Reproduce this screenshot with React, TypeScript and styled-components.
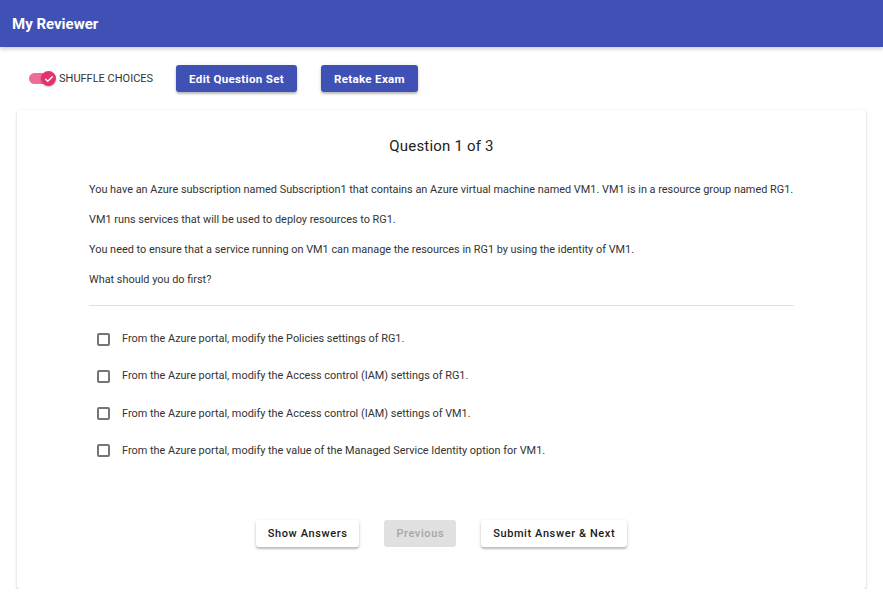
import React from "react";
import styled, { createGlobalStyle } from "styled-components";

const Global = createGlobalStyle`
  html, body { margin: 0; padding: 0; background: #fff; }
  body { font-family: Roboto, "Noto Sans", Arial, sans-serif; color: #222; }
  * { box-sizing: border-box; }
`;

const Header = styled.header`
  height: 47px;
  background: #3f51b5;
  display: flex;
  align-items: center;
  padding: 0 12px;
  box-shadow: 0 2px 4px rgba(0,0,0,0.2);
`;

const Title = styled.h1`
  margin: 0;
  color: #fff;
  font-size: 15px;
  font-weight: 700;
`;

const Main = styled.main`
  padding: 18px 17px 0 17px;
`;

const Toolbar = styled.div`
  display: flex;
  align-items: center;
  padding-left: 12px;
  height: 27px;
  margin-bottom: 18px;
`;

const SwitchWrap = styled.label`
  display: flex;
  align-items: center;
  font-size: 11px;
  color: #333;
  margin-right: 23px;
`;

const Track = styled.span`
  position: relative;
  width: 22px;
  height: 11px;
  border-radius: 6px;
  background: #ef6b98;
  margin-right: 8px;
`;

const Thumb = styled.span`
  position: absolute;
  left: 12px;
  top: -2px;
  width: 15px;
  height: 15px;
  border-radius: 50%;
  background: #e2336f;
  display: flex;
  align-items: center;
  justify-content: center;
  box-shadow: 0 1px 2px rgba(0,0,0,0.25);
`;

const PrimaryButton = styled.button`
  height: 27px;
  padding: 0 13px;
  border: none;
  border-radius: 3px;
  background: #3f51b5;
  color: #fff;
  font-family: Roboto, Arial, sans-serif;
  font-weight: 700;
  font-size: 11.6px;
  letter-spacing: 0.3px;
  margin-right: 24px;
  box-shadow: 0 2px 2px rgba(0,0,0,0.2), 0 1px 4px rgba(0,0,0,0.12);
`;

const Card = styled.section`
  background: #fff;
  border-radius: 3px;
  box-shadow: 0 1px 3px rgba(0,0,0,0.2), 0 1px 1px rgba(0,0,0,0.1);
  padding: 27px 72px 42px 72px;
  height: 479px;
  display: flex;
  flex-direction: column;
`;

const QTitle = styled.h2`
  margin: 0 0 28px 0;
  text-align: center;
  font-size: 15px;
  font-weight: 400;
  color: #222;
  letter-spacing: 0.2px;
`;

const Para = styled.p`
  margin: 0 0 16px 0;
  font-size: 10.9px;
  line-height: 14px;
  color: #333;
`;

const Divider = styled.hr`
  border: none;
  border-top: 1px solid #e0e0e0;
  margin: 2px 0 26px 0;
`;

const Options = styled.div`
  display: flex;
  flex-direction: column;
  gap: 23.3px;
  padding-left: 8px;
`;

const Option = styled.label`
  display: flex;
  align-items: center;
  gap: 12px;
  font-size: 10.9px;
  line-height: 14px;
  color: #333;
`;

const Box = styled.span`
  width: 13px;
  height: 13px;
  border: 2px solid #757575;
  border-radius: 2px;
`;

const Actions = styled.div`
  margin-top: auto;
  display: flex;
  justify-content: center;
  gap: 25px;
`;

const ActionButton = styled.button<{ $disabled?: boolean }>`
  height: 27px;
  padding: 0 12px;
  border: none;
  border-radius: 3px;
  font-family: Roboto, Arial, sans-serif;
  font-weight: 500;
  font-size: 11px;
  letter-spacing: 0.6px;
  background: ${(p) => (p.$disabled ? "#e0e0e0" : "#fff")};
  color: ${(p) => (p.$disabled ? "#a6a6a6" : "#1a1a1a")};
  box-shadow: ${(p) =>
    p.$disabled ? "none" : "0 2px 2px rgba(0,0,0,0.2), 0 1px 4px rgba(0,0,0,0.12)"};
`;

const options = [
  "From the Azure portal, modify the Policies settings of RG1.",
  "From the Azure portal, modify the Access control (IAM) settings of RG1.",
  "From the Azure portal, modify the Access control (IAM) settings of VM1.",
  "From the Azure portal, modify the value of the Managed Service Identity option for VM1.",
];

export default function App() {
  return (
    <>
      <Global />
      <Header>
        <Title>My Reviewer</Title>
      </Header>
      <Main>
        <Toolbar>
          <SwitchWrap>
            <Track>
              <Thumb>
                <svg width="10" height="10" viewBox="0 0 24 24">
                  <path d="M4 12.5l5 5L20 6.5" fill="none" stroke="#fff" strokeWidth="3.2" strokeLinecap="round" strokeLinejoin="round" />
                </svg>
              </Thumb>
            </Track>
            SHUFFLE CHOICES
          </SwitchWrap>
          <PrimaryButton>Edit Question Set</PrimaryButton>
          <PrimaryButton>Retake Exam</PrimaryButton>
        </Toolbar>
        <Card>
          <QTitle>Question 1 of 3</QTitle>
          <Para>
            You have an Azure subscription named Subscription1 that contains an Azure virtual machine named VM1. VM1 is in a resource group named RG1.
          </Para>
          <Para>VM1 runs services that will be used to deploy resources to RG1.</Para>
          <Para>
            You need to ensure that a service running on VM1 can manage the resources in RG1 by using the identity of VM1.
          </Para>
          <Para>What should you do first?</Para>
          <Divider />
          <Options>
            {options.map((o) => (
              <Option key={o}>
                <Box />
                {o}
              </Option>
            ))}
          </Options>
          <Actions>
            <ActionButton>Show Answers</ActionButton>
            <ActionButton $disabled>Previous</ActionButton>
            <ActionButton>Submit Answer &amp; Next</ActionButton>
          </Actions>
        </Card>
      </Main>
    </>
  );
}
